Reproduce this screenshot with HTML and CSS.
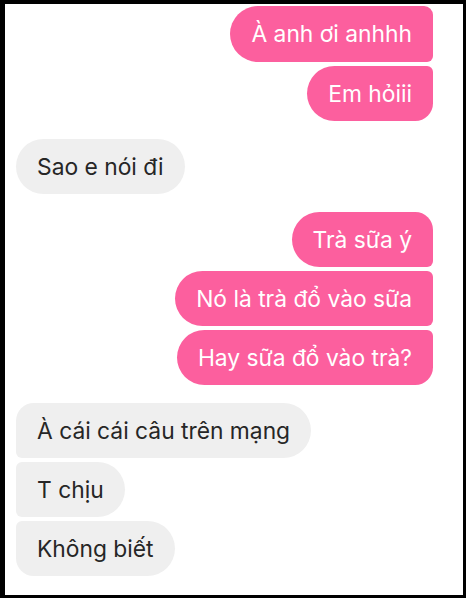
FILE: index.html
```html
<!DOCTYPE html>
<html lang="vi">
<head>
<meta charset="utf-8">
<link rel="stylesheet" href="styles.css">
</head>
<body>
<div class="frame">
  <div class="chat">
    <div class="group out">
      <div class="bubble first top-cut">À anh ơi anhhh</div>
      <div class="bubble last">Em hỏiii</div>
    </div>
    <div class="group in">
      <div class="bubble solo">Sao e nói đi</div>
    </div>
    <div class="group out">
      <div class="bubble first">Trà sữa ý</div>
      <div class="bubble mid">Nó là trà đổ vào sữa</div>
      <div class="bubble last">Hay sữa đổ vào trà?</div>
    </div>
    <div class="group in">
      <div class="bubble first">À cái cái câu trên mạng</div>
      <div class="bubble mid">T chịu</div>
      <div class="bubble last">Không biết</div>
    </div>
  </div>
</div>
</body>
</html>
```
FILE: styles.css
```css
html, body {
  margin: 0;
  padding: 0;
  background: #000;
}
.frame {
  width: 466px;
  height: 598px;
  box-sizing: border-box;
  border-style: solid;
  border-color: #000;
  border-width: 4px 3px 3px 5px;
  background: #fff;
  overflow: hidden;
}
.chat {
  display: flex;
  flex-direction: column;
  gap: 18px;
  padding: 2px 30px 0 11px;
}
.group {
  display: flex;
  flex-direction: column;
  gap: 4px;
}
.group.out { align-items: flex-end; }
.group.in { align-items: flex-start; }
.bubble {
  font-family: "Inter", "Noto Sans", sans-serif;
  font-size: 22.8px;
  line-height: 27px;
  padding: 14px 21px;
  box-sizing: border-box;
  height: 55px;
}
.out .bubble {
  background: #fc5f9e;
  color: #fff;
  border-radius: 28px 6px 6px 28px;
}
.out .bubble.first { border-top-right-radius: 18px; }
.out .bubble.top-cut { border-top-right-radius: 9px; height: 56px; }
.out .bubble.last { border-bottom-right-radius: 18px; }
.in .bubble {
  background: #efefef;
  color: #262626;
  border-radius: 6px 28px 28px 6px;
}
.in .bubble.solo { border-radius: 28px; }
.in .bubble.first { border-top-left-radius: 18px; }
.in .bubble.last { border-bottom-left-radius: 18px; }
```
